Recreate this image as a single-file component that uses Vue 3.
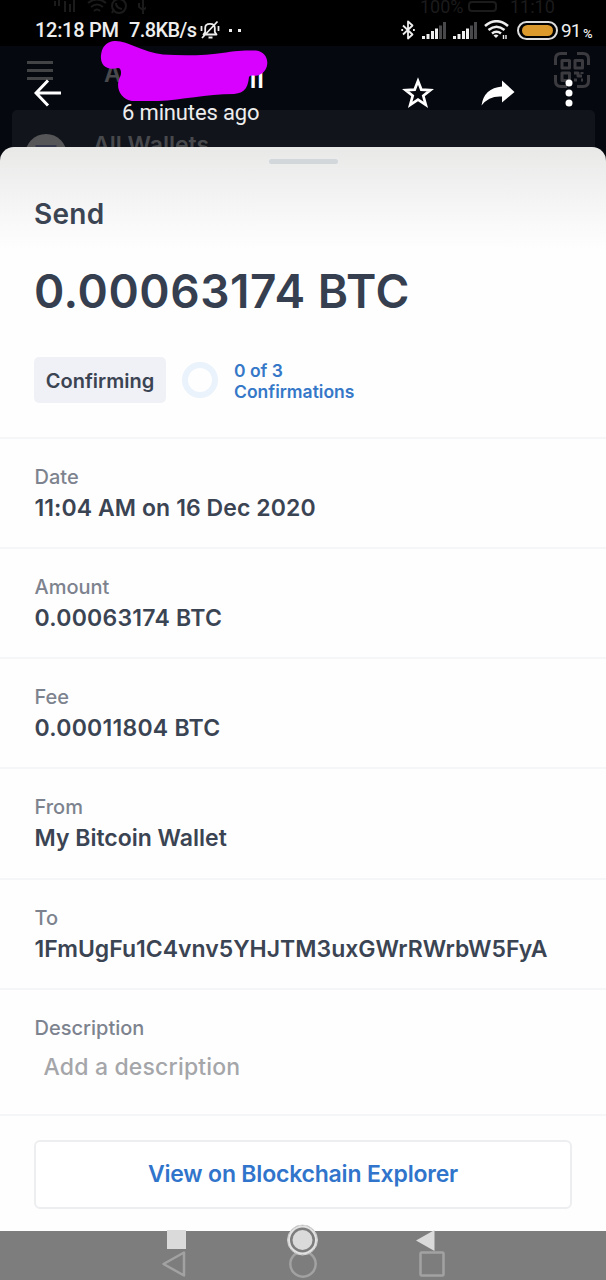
<template>
  <div class="screen">
    <!-- wallet page, dimmed behind the sheet -->
    <header class="wallet-top">
      <div class="dim-status">
        <svg class="dim-icons" width="94" height="16" viewBox="0 0 94 16">
          <path d="M3 1v5M7 0v6M13 1v11M18 4v8M22 0v12M36 3q9-7 18 0M39 7q6-5 12 0M42 11q3-3 6 0" />
          <circle cx="67" cy="6" r="7" />
          <path d="M64 3q0 5 6 6M60 13l2-4M91 0v14M87 3v4l4 3 4-3V3" />
        </svg>
        <span class="dim-percent">100%</span>
        <svg class="dim-battery" width="34" height="14" viewBox="0 0 34 14">
          <rect x="2" y="2" width="27" height="9" rx="3" />
        </svg>
        <span>11:10</span>
      </div>
      <div class="wallet-nav">
        <svg class="menu" width="26" height="20" viewBox="0 0 26 20">
          <path d="M0 1.5h26M0 9.5h26M0 17.5h26" />
        </svg>
        <span class="wallet-title">A</span>
        <svg class="qr" width="36" height="36" viewBox="0 0 36 36">
          <path d="M1.5 13V7q0-5.5 5.500-5.500h6M23 1.500h6q5.500 0 5.500 5.500v6M34.500 23v6q0 5.500-5.500 5.500h-6M13 34.500H7q-5.500 0-5.500-5.500v-6" />
          <path d="M8 8.500h7.500v7.500H8zM21 8.500h7.500v7.500H21zM8 21h7.500v7.500H8zM20 21h4v3h4M28 20v2M20 28h3M27 28h2" />
        </svg>
      </div>
      <div class="wallet-card">
        <span class="coin"></span>
        <span class="card-label">All Wallets</span>
      </div>
    </header>

    <main class="sheet">
      <div class="handle"></div>
      <section class="summary">
        <h2>Send</h2>
        <h1>0.00063174 BTC</h1>
        <div class="state">
          <span class="badge">Confirming</span>
          <span class="ring"></span>
          <span class="confirmations">0 of 3<br />Confirmations</span>
        </div>
      </section>
      <section v-for="row in rows" :key="row.label" class="row">
        <span class="label">{{ row.label }}</span>
        <span class="value" :class="row.kind">{{ row.value }}</span>
      </section>
      <section class="row description">
        <span class="label">Description</span>
        <span class="placeholder">Add a description</span>
      </section>
      <div class="action">
        <button type="button">View on Blockchain Explorer</button>
      </div>
    </main>

    <footer class="nav-bar">
      <svg width="26" height="28" viewBox="0 0 26 28"><path d="M23 2.500v23L2.500 14z" /></svg>
      <svg width="28" height="28" viewBox="0 0 28 28"><circle cx="14" cy="14" r="12.700" /></svg>
      <svg width="26" height="28" viewBox="0 0 26 28"><rect x="1.500" y="2.500" width="23" height="23" rx="1" /></svg>
    </footer>

    <!-- photo viewer controls on top -->
    <div class="viewer">
      <div class="status">
        <span class="clock">12:18 PM</span>
        <span class="speed">7.8KB/s</span>
        <svg class="mute" width="20" height="20" viewBox="0 0 20 20">
          <path d="M3.500 14.500h13L14.800 12V8q0-4.200-4.800-4.200T5.200 8v4zM8.500 17.500h4M2 18L17.500 1.500M1.500 6v5M18.500 6v5" />
        </svg>
        <span class="more"><i></i><i></i></span>
        <svg class="bluetooth" width="14" height="20" viewBox="0 0 14 20">
          <path d="M2 5.500l9.500 9L7 18.500v-17l4.500 4-9.500 9" />
          <path d="M.3 10h1.800M12 10h1.800" />
        </svg>
        <svg v-for="n in 2" :key="n" class="signal" width="24" height="17" viewBox="0 0 24 17">
          <path d="M1.500 14v3M6 12v5M10.500 9v8M14.500 6.500V17" />
          <path class="off" d="M18.500 3.500V17M22.500 0v17" />
        </svg>
        <svg class="wifi" width="25" height="20" viewBox="0 0 25 20">
          <path d="M1 6Q12.500-3.500 24 6M4.500 10q8-6.500 16 0M8 13.500q4.500-3.500 9 0" />
          <path class="fill" d="M9.500 15.500q2.500-2 5 0L12 18z" />
          <path class="arrows" d="M19.500 15v4M22 15v4" />
        </svg>
        <span class="battery"><i></i></span>
        <span class="charge">91</span>
        <small class="unit">%</small>
      </div>
      <div class="toolbar">
        <svg class="back" width="28" height="28" viewBox="0 0 28 28">
          <path d="M14 1.500L2 14l12 12.500M2 14h25" />
        </svg>
        <div class="heading">
          <strong>ll</strong>
          <span>6 minutes ago</span>
        </div>
        <svg class="star" width="32" height="32" viewBox="0 0 32 32">
          <path d="M16 4l3.300 8.600 9.200.5-7.200 5.700 2.500 9L16 22.700l-7.800 5.100 2.500-9-7.200-5.700 9.200-.5z" />
        </svg>
        <svg class="share" width="34" height="26" viewBox="0 0 34 26">
          <path d="M21 .5L33.500 12 21 22.500V16.500Q8 15.500.500 25.500 3 8 21 6.500z" />
        </svg>
        <svg class="dots" width="8" height="28" viewBox="0 0 8 28">
          <circle cx="4" cy="4" r="3.500" /><circle cx="4" cy="14" r="3.500" /><circle cx="4" cy="24" r="3.500" />
        </svg>
      </div>
    </div>
    <svg class="scribble" width="170" height="66" viewBox="0 0 170 66">
      <path d="M14 1C27 0 42 12 63 14.500 85 16 105 15.500 126 12.500 138 10.500 146 10.500 156 10.500 170 12 171 30 159 35 156 37 151 34 149 37 148 46 146 53 134 54 105 54 83 60 58 61H32C20 59 15 47 20 37 22 33 21 28 18 28 6 31 0 25 1 15 2 7 6 2 14 1z" />
    </svg>
    <svg class="viewer-nav" width="270" height="32" viewBox="0 0 270 32">
      <path d="M1 6h19v19H1zM268.500 6v21L250 16.500z" />
      <circle class="halo" cx="136.500" cy="16" r="15" />
      <circle class="outline" cx="136.500" cy="16" r="13.500" />
      <circle cx="136.500" cy="16" r="10" />
    </svg>
  </div>
</template>

<script setup>
const rows = [
  { label: "Date", value: "11:04 AM on 16 Dec 2020", kind: "date" },
  { label: "Amount", value: "0.00063174 BTC", kind: "btc" },
  { label: "Fee", value: "0.00011804 BTC", kind: "btc" },
  { label: "From", value: "My Bitcoin Wallet", kind: "name" },
  { label: "To", value: "1FmUgFu1C4vnv5YHJTM3uxGWrRWrbW5FyA", kind: "address" }
];
</script>

<style>
body {
  margin: 0;
  background: #05060b;
}
</style>

<style scoped>
.screen {
  position: relative;
  display: flex;
  flex-direction: column;
  width: 606px;
  height: 1280px;
  overflow: hidden;
  box-sizing: border-box;
  background: #060810;
  font-family: Inter, "Liberation Sans", sans-serif;
}

svg {
  flex: none;
  fill: none;
  stroke-linejoin: round;
}

.wallet-top {
  height: 147px;
  color: #48494c;
}

.dim-status {
  display: flex;
  align-items: flex-start;
  height: 46px;
  padding-left: 52px;
  box-sizing: border-box;
  background: #000;
  color: #1b1b1c;
  font: 18px/14px Roboto, sans-serif;
}

.dim-icons,
.dim-battery {
  stroke: #1b1b1c;
  stroke-width: 2;
}

.dim-percent {
  margin-left: 274px;
  width: 47px;
}

.dim-battery {
  margin-right: 9px;
}

.wallet-nav {
  display: flex;
  height: 64px;
}

.menu {
  margin: 15px 0 0 27px;
  stroke: #424345;
  stroke-width: 3;
}

.wallet-title {
  margin: 13px 0 0 51px;
  width: 450px;
  font-size: 24px;
  font-weight: 600;
}

.qr {
  margin-top: 6px;
  stroke: #3a3a3f;
  stroke-width: 3;
}

.wallet-card {
  display: flex;
  height: 50px;
  margin: 0 11px 0 12px;
  border-radius: 5px;
  background: #11141b;
}

.coin {
  width: 42px;
  height: 42px;
  margin: 24px 26px 0 13px;
  border-radius: 50%;
  background: linear-gradient(90deg, transparent 10px, #34384a 11px 31px, transparent 32px) 0 11px no-repeat, #565658;
}

.card-label {
  margin-top: 22px;
  font-size: 23px;
  line-height: 26px;
  font-weight: 600;
}

.sheet {
  position: relative;
  height: 1084px;
  overflow: hidden;
  border-radius: 14px 14px 0 0;
  background: linear-gradient(#e8e9e7, #f0f0f0 35px, #fafafa 80px, #fefefe 104px);
  color: #3b4453;
}

.handle {
  width: 69px;
  height: 5px;
  margin: 12px auto 0;
  border-radius: 3px;
  background: #d2d7dc;
}

.summary {
  height: 272.5px;
  padding: 0 34px;
}

.summary h2 {
  margin: 0;
  padding-top: 33px;
  font-size: 28px;
  line-height: 34px;
  font-weight: 600;
  letter-spacing: 0.3px;
}

.summary h1 {
  margin: 32px 0 0;
  color: #353f4f;
  font-size: 46px;
  line-height: 56px;
  font-weight: 600;
  letter-spacing: 0.55px;
  white-space: nowrap;
}

.state {
  display: flex;
  align-items: center;
  margin-top: 38px;
}

.badge {
  width: 132px;
  height: 46px;
  border-radius: 5px;
  background: #f0f1f6;
  font-size: 20px;
  line-height: 48px;
  font-weight: 600;
  text-align: center;
}

.ring {
  width: 24px;
  height: 24px;
  margin: 0 16px;
  border: 6px solid #eaf2fc;
  border-radius: 50%;
}

.confirmations {
  padding-top: 2px;
  color: #3578c8;
  font-size: 17.5px;
  line-height: 21px;
  font-weight: 600;
}

.row {
  display: flex;
  flex-direction: column;
  height: 110.25px;
  padding: 26px 34px 0 34.5px;
  border-top: 2px solid #f5f6f7;
  box-sizing: border-box;
}

.label {
  color: #7d838e;
  font-size: 20px;
  line-height: 24px;
  font-weight: 500;
}

.value {
  margin-top: 5px;
  font-size: 23px;
  line-height: 28px;
  font-weight: 600;
  white-space: nowrap;
}

.date {
  letter-spacing: 0.08px;
}

.btc {
  letter-spacing: 0.25px;
}

.description {
  height: 126px;
}

.placeholder {
  margin: 13px 0 0 9px;
  color: #a5a6a9;
  font-size: 23px;
  line-height: 28px;
  font-weight: 500;
  letter-spacing: 0.18px;
}

.action {
  padding: 24px 34px;
  border-top: 2px solid #f5f6f7;
}

.action button {
  width: 538px;
  height: 69px;
  padding: 0;
  border: 2px solid #edeef0;
  border-radius: 6px;
  background: #fff;
  color: #3075cb;
  font: 600 23px Inter, sans-serif;
  letter-spacing: -0.2px;
}

.nav-bar {
  display: flex;
  justify-content: space-between;
  height: 49px;
  padding: 19px 161px 0;
  box-sizing: border-box;
  background: #7d7d7d;
}

.nav-bar svg {
  stroke: #a2a2a2;
  stroke-width: 2.5;
}

.viewer {
  position: absolute;
  top: 0;
  left: 0;
  width: 606px;
  color: #eee;
  font-family: Roboto, "Liberation Sans", sans-serif;
}

.status {
  display: flex;
  align-items: center;
  height: 60px;
  padding-left: 35px;
  font-size: 20px;
  line-height: 24px;
  font-weight: 500;
}

.status svg {
  stroke: #eee;
  stroke-width: 1.8;
}

.clock {
  width: 94px;
  letter-spacing: -0.3px;
}

.speed {
  width: 71px;
  letter-spacing: -0.6px;
}

.more {
  display: flex;
  gap: 6px;
  width: 154px;
  margin-left: 9px;
}

.more i {
  width: 3px;
  height: 3px;
  background: #eee;
}

.bluetooth {
  margin: 0 7px 0 18px;
}

.status .signal {
  margin-right: 7px;
  stroke-width: 3;
}

.signal .off {
  stroke: #48484b;
}

.status .wifi {
  margin-right: 8px;
  stroke-width: 2.6;
}

.wifi .fill {
  fill: #eee;
  stroke: none;
}

.wifi .arrows {
  stroke-width: 1.4;
}

.battery {
  width: 35px;
  height: 13px;
  padding: 1px;
  border: 2px solid #ddd;
  border-radius: 10px;
}

.battery i {
  display: block;
  height: 11px;
  margin: 1px 2px;
  border-radius: 6px;
  background: #dc9a2d;
}

.charge {
  width: 22px;
  margin: 2px 0 0 3px;
  font-size: 19px;
  font-weight: 400;
  letter-spacing: -1px;
}

.unit {
  padding-top: 8px;
  font-size: 13px;
  line-height: 16px;
}

.toolbar {
  display: flex;
  align-items: center;
  height: 66px;
}

.back {
  margin-left: 34px;
  stroke: #fff;
  stroke-width: 3;
  stroke-linejoin: miter;
}

.heading {
  display: flex;
  flex-direction: column;
  gap: 4px;
  width: 280px;
  margin: 8px 0 0 60px;
}

.heading strong {
  padding-left: 128px;
  font-size: 23px;
  line-height: 28px;
  font-weight: 700;
  letter-spacing: 1.5px;
  color: #fff;
}

.heading span {
  font-size: 22px;
  line-height: 28px;
  letter-spacing: -0.15px;
}

.star {
  stroke: #fff;
  stroke-width: 2.7;
  stroke-linejoin: miter;
}

.share {
  margin-left: 47px;
  fill: #fff;
}

.dots {
  margin-left: 50px;
  fill: #fff;
}

.scribble {
  position: absolute;
  top: 40px;
  left: 100px;
  fill: #d800ff;
}

.viewer-nav {
  position: absolute;
  top: 1224px;
  left: 166px;
  fill: #dadada;
}

.viewer-nav .halo {
  fill: #7d7d7d;
  stroke: #d5d5d5;
}

.viewer-nav .outline {
  fill: #7d7d7d;
  stroke: #e2e2e2;
  stroke-width: 2;
}
</style>
